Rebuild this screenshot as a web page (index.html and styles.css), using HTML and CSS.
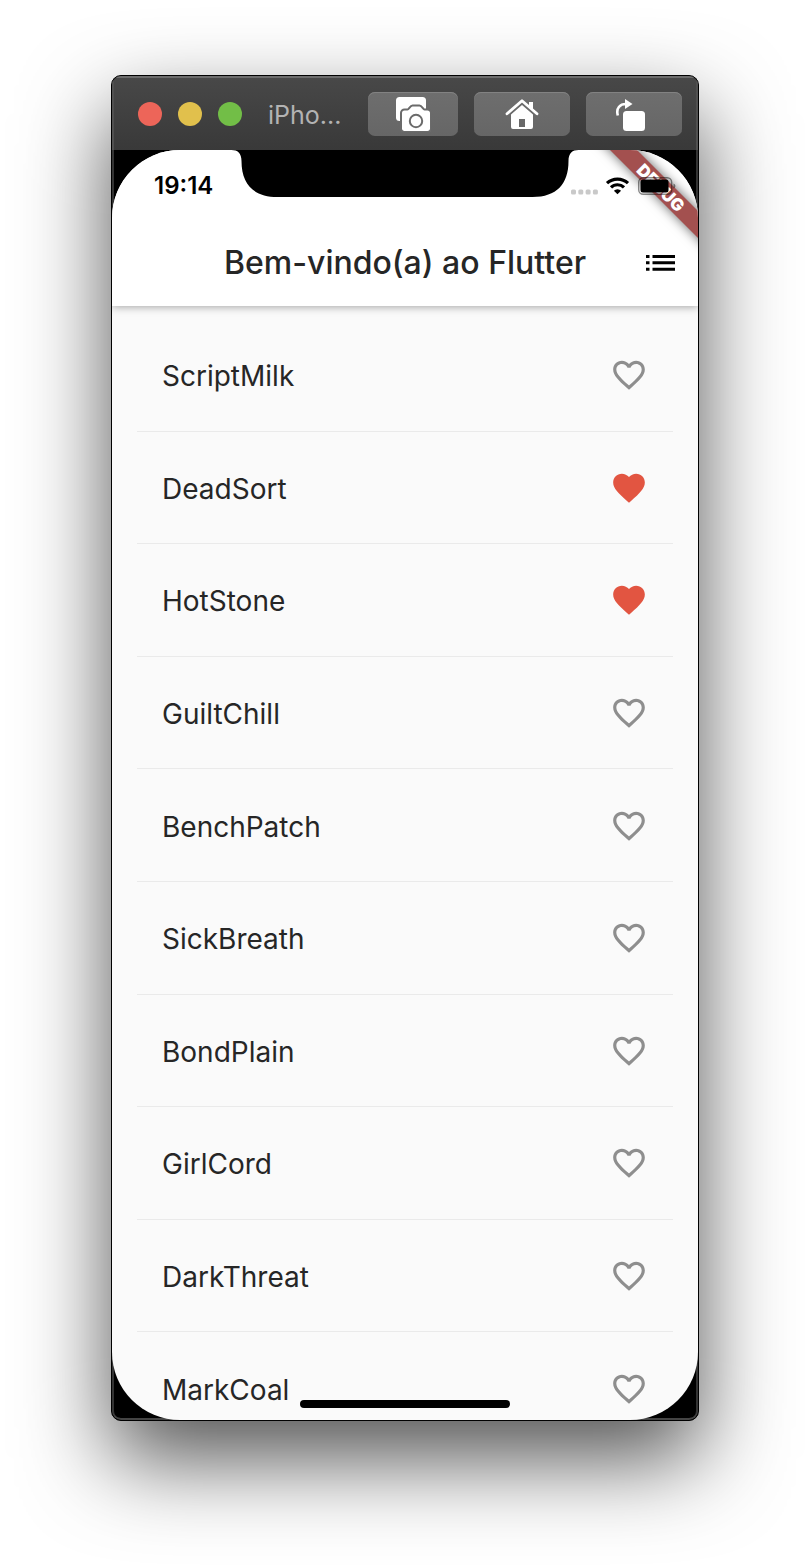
FILE: index.html
```html
<!DOCTYPE html>
<html lang="pt-BR">
<head>
<meta charset="utf-8">
<meta name="viewport" content="width=device-width, initial-scale=1">
<title>Bem-vindo(a) ao Flutter</title>
<link rel="stylesheet" href="styles.css">
</head>
<body>
<svg width="0" height="0" class="defs" aria-hidden="true">
  <symbol id="heart-outline" viewBox="0 0 24 24"><path d="M16.5 3c-1.74 0-3.41.81-4.5 2.09C10.91 3.81 9.24 3 7.5 3 4.42 3 2 5.42 2 8.5c0 3.78 3.4 6.86 8.55 11.54L12 21.35l1.45-1.32C18.6 15.36 22 12.28 22 8.5 22 5.42 19.58 3 16.5 3zm-4.4 15.55l-.1.1-.1-.1C7.14 14.24 4 11.39 4 8.5 4 6.5 5.5 5 7.5 5c1.54 0 3.04.99 3.57 2.36h1.87C13.46 5.99 14.96 5 16.5 5c2 0 3.5 1.5 3.5 3.5 0 2.89-3.14 5.74-7.9 10.05z"/></symbol>
  <symbol id="heart-full" viewBox="0 0 24 24"><path d="M12 21.35l-1.45-1.32C5.4 15.36 2 12.28 2 8.5 2 5.42 4.42 3 7.5 3c1.74 0 3.41.81 4.5 2.09C13.09 3.81 14.76 3 16.5 3 19.58 3 22 5.42 22 8.5c0 3.78-3.4 6.86-8.55 11.54L12 21.35z"/></symbol>
</svg>
<main class="window">
  <header class="titlebar">
    <div class="lights">
      <button class="light light-close" aria-label="Fechar"></button>
      <button class="light light-min" aria-label="Minimizar"></button>
      <button class="light light-zoom" aria-label="Ampliar"></button>
    </div>
    <span class="device-name">iPho...</span>
    <div class="tools">
      <button class="tool tool-narrow" aria-label="Captura de tela">
        <svg width="36" height="36" viewBox="0 0 36 36"><rect x="1" y="1" width="30" height="24" rx="3.500" fill="#fff"/><path fill="#fff" stroke="#6b6b6b" stroke-width="2" d="M9.500 13.500h3c1.500 0 2.500-4 5-4h7c2.500 0 3.500 4 5 4h3a3.500 3.500 0 0 1 3.500 3.500v15.500a3.500 3.500 0 0 1-3.500 3.500h-23a3.500 3.500 0 0 1-3.500-3.500V17a3.500 3.500 0 0 1 3.500-3.500z"/><circle cx="21" cy="25" r="6.200" fill="#fff" stroke="#6b6b6b" stroke-width="2"/></svg>
      </button>
      <button class="tool" aria-label="Início">
        <svg width="36" height="36" viewBox="0 0 36 36"><path fill="none" stroke="#fff" stroke-width="2.800" stroke-linecap="round" stroke-linejoin="round" d="M3 17.800L18 4.800l15 13"/><path fill="#fff" d="M25 6h4v8l-4-3.500z"/><path fill="#fff" fill-rule="evenodd" d="M18 9l11 9.500V31a2 2 0 0 1-2 2H9a2 2 0 0 1-2-2V18.500zM15 23v8h6v-8z"/></svg>
      </button>
      <button class="tool" aria-label="Girar">
        <svg width="36" height="36" viewBox="0 0 36 36"><rect x="7" y="15" width="22" height="20" rx="3.500" fill="#fff"/><path fill="none" stroke="#fff" stroke-width="2.600" d="M1.800 19.500C-.200 12 4 8 10 8"/><path fill="#fff" d="M9 3l7.500 5L9 13z"/></svg>
      </button>
    </div>
  </header>
  <div class="bezel">
    <div class="screen">
      <svg class="notch" width="347" height="47" viewBox="0 0 347 47" aria-hidden="true"><path d="M0 0c6 0 10 3 10 11 0 23 12 36 36 36h255c24 0 36-13 36-36 0-8 4-11 10-11z"/></svg>
      <svg class="ribbon" width="88" height="88" viewBox="0 0 88 88">
        <path class="ribbon-band" d="M-20-20H7L108 81v27z"/>
        <text class="ribbon-text" x="51" y="44" transform="rotate(45 51 37.500)">DEBUG</text>
      </svg>
      <div class="status">
        <time class="clock">19:14</time>
        <svg class="status-icons" width="106" height="20" viewBox="0 0 106 20" aria-hidden="true">
          <g fill="#c9c9c9"><rect x="1" y="13.500" width="5" height="5" rx="1.500"/><rect x="8.300" y="13.500" width="5" height="5" rx="1.500"/><rect x="15.600" y="13.500" width="5" height="5" rx="1.500"/><rect x="22.900" y="13.500" width="5" height="5" rx="1.500"/></g>
          <g fill="none" stroke="#000" stroke-width="3.200"><path d="M37 7.200a15.300 15.300 0 0 1 21 0"/><path d="M41 11.400a9.300 9.300 0 0 1 13 0"/></g>
          <path d="M47.500 18.200l-3.600-3.500a5 5 0 0 1 7.200 0z"/>
          <rect x="68.700" y="1.700" width="33" height="16.500" rx="4.500" fill="none" stroke="#000" stroke-opacity=".45" stroke-width="1.400"/>
          <rect x="70.500" y="3.500" width="28" height="13" rx="2.500"/>
          <path d="M103.500 7.500c2.500 1 2.500 4 0 5z" fill-opacity=".45"/>
        </svg>
      </div>
      <div class="appbar">
        <h1 class="title">Bem-vindo(a) ao Flutter</h1>
        <button class="menu" aria-label="Favoritos">
          <svg width="30" height="18" viewBox="0 0 30 18"><path d="M0 1h3.500v3H0zM6.500 1H29v3H6.500zM0 7.300h3.500v3H0zM6.500 7.300H29v3H6.500zM0 13.700h3.500v3H0zM6.500 13.700H29v3H6.500z"/></svg>
        </button>
      </div>
      <ul class="list">
        <li class="row"><span>ScriptMilk</span><button class="fav" aria-label="Favoritar ScriptMilk"><svg class="heart"><use href="#heart-outline"/></svg></button></li>
        <li class="row"><span>DeadSort</span><button class="fav fav-on" aria-label="Favoritar DeadSort"><svg class="heart"><use href="#heart-full"/></svg></button></li>
        <li class="row"><span>HotStone</span><button class="fav fav-on" aria-label="Favoritar HotStone"><svg class="heart"><use href="#heart-full"/></svg></button></li>
        <li class="row"><span>GuiltChill</span><button class="fav" aria-label="Favoritar GuiltChill"><svg class="heart"><use href="#heart-outline"/></svg></button></li>
        <li class="row"><span>BenchPatch</span><button class="fav" aria-label="Favoritar BenchPatch"><svg class="heart"><use href="#heart-outline"/></svg></button></li>
        <li class="row"><span>SickBreath</span><button class="fav" aria-label="Favoritar SickBreath"><svg class="heart"><use href="#heart-outline"/></svg></button></li>
        <li class="row"><span>BondPlain</span><button class="fav" aria-label="Favoritar BondPlain"><svg class="heart"><use href="#heart-outline"/></svg></button></li>
        <li class="row"><span>GirlCord</span><button class="fav" aria-label="Favoritar GirlCord"><svg class="heart"><use href="#heart-outline"/></svg></button></li>
        <li class="row"><span>DarkThreat</span><button class="fav" aria-label="Favoritar DarkThreat"><svg class="heart"><use href="#heart-outline"/></svg></button></li>
        <li class="row"><span>MarkCoal</span><button class="fav" aria-label="Favoritar MarkCoal"><svg class="heart"><use href="#heart-outline"/></svg></button></li>
      </ul>
      <div class="home-indicator"></div>
    </div>
  </div>
</main>
</body>
</html>
```
FILE: styles.css
```css
* { box-sizing: border-box; }

body {
  margin: 0;
  height: 100vh;
  padding: 75px 111px 147px;
  display: flex;
  background: #fff;
  font-family: Inter, "Liberation Sans", sans-serif;
  color: #262626;
}

button {
  padding: 0;
  border: 0;
  background: none;
  color: inherit;
  font: inherit;
}

svg { display: block; }
.defs { position: absolute; }

.window {
  flex: 1;
  min-width: 0;
  display: flex;
  flex-direction: column;
  border: 1px solid #000;
  border-radius: 10px;
  overflow: hidden;
  background: #000;
  box-shadow: 0 38px 88px rgba(0, 0, 0, .68);
}

.titlebar {
  flex: none;
  display: flex;
  align-items: center;
  height: 74px;
  padding: 2px 16px 0 26px;
  background: linear-gradient(#484848, #393939);
  box-shadow: inset 0 2px 0 #6c6c6c, inset 2px 0 0 #505050, inset -2px 0 0 #505050;
}

.lights { display: flex; gap: 16px; }
.light { width: 24px; height: 24px; border-radius: 50%; }
.light-close { background: #ed6559; }
.light-min { background: #e1c04c; }
.light-zoom { background: #72be47; }

.device-name {
  margin-left: 26px;
  padding-top: 2px;
  font-size: 25px;
  line-height: 32px;
  color: #b3b3b3;
}

.tools { display: flex; gap: 16px; margin-left: auto; }
.tool {
  display: flex;
  align-items: center;
  justify-content: center;
  width: 96px;
  height: 44px;
  border-radius: 7px;
  background: linear-gradient(#6e6e6e, #666);
  box-shadow: inset 0 1px 0 #828282;
}
.tool-narrow { width: 90px; }

.bezel {
  flex: 1;
  min-height: 0;
  display: flex;
  border-radius: 0 0 9px 9px;
  background: #000;
  box-shadow: inset 0 -2px 0 #444, inset 2px 0 0 #333, inset -2px 0 0 #333;
}

.screen {
  position: relative;
  flex: 1;
  min-width: 0;
  display: flex;
  flex-direction: column;
  overflow: hidden;
  border-radius: 68px;
  background: #fafafa;
}

.notch {
  position: absolute;
  top: 0;
  left: 50%;
  transform: translateX(-50%);
  z-index: 2;
}

.ribbon {
  position: absolute;
  top: 0;
  right: 0;
  z-index: 2;
  overflow: visible;
}
.ribbon-band { fill: #a3504f; filter: drop-shadow(0 0 6px rgba(0, 0, 0, .6)); }
.ribbon-text {
  fill: #fff;
  font-size: 17px;
  font-weight: 900;
  text-anchor: middle;
}

.status {
  position: relative;
  z-index: 3;
  flex: none;
  display: flex;
  align-items: center;
  justify-content: space-between;
  height: 72px;
  padding: 0 22px 0 42px;
}
.clock { font-size: 24px; line-height: 28px; font-weight: 600; color: #000; }

.appbar {
  flex: none;
  display: grid;
  grid-template-columns: 1fr auto 1fr;
  align-items: center;
  height: 156px;
  margin-top: -72px;
  padding: 70px 22px 0;
  background: #fff;
  box-shadow: 0 1px 8px rgba(0, 0, 0, .35);
  z-index: 1;
}
.title {
  grid-column: 2;
  margin: 0;
  font-size: 32px;
  line-height: 40px;
  font-weight: 500;
  white-space: nowrap;
}
.menu { justify-self: end; }

.list {
  flex: none;
  display: grid;
  grid-auto-rows: 1fr;
  height: 1139px;
  margin: 0;
  padding: 13px 25px 0;
  list-style: none;
}
.row {
  display: flex;
  align-items: center;
  justify-content: space-between;
  padding: 1px 25px 0;
  border-bottom: 1px solid #eaeaea;
  font-size: 28px;
  line-height: 36px;
}
.row span { padding-top: 2px; }
.fav { color: #8e8e8e; }
.fav-on { color: #e25541; }
.heart { width: 38px; height: 38px; fill: currentColor; }

.home-indicator {
  position: absolute;
  bottom: 12px;
  left: 50%;
  width: 210px;
  height: 8px;
  border-radius: 4px;
  background: #000;
  transform: translateX(-50%);
}
```
